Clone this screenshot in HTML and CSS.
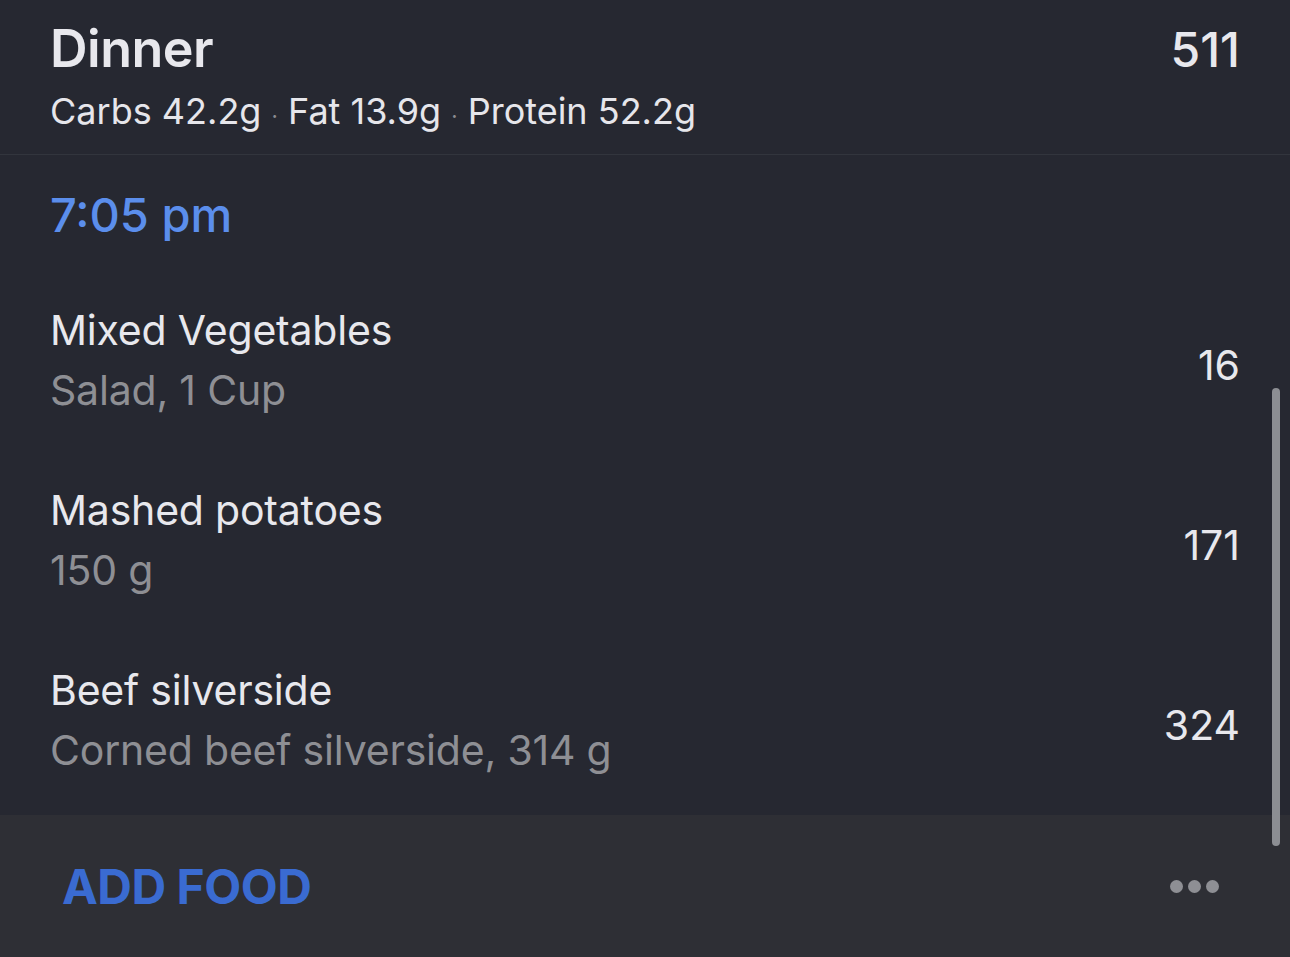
FILE: index.html
```html
<!DOCTYPE html>
<html lang="en">
<head>
    <meta charset="UTF-8">
    <meta name="viewport" content="width=device-width, initial-scale=1.0">
    <title>Dinner</title>
    <link rel="stylesheet" href="styles.css">
</head>
<body>

    <div class="screen">
        <header class="meal-header">
            <div class="meal-info">
                <h1 class="meal-title">Dinner</h1>
                <div class="macros">
                    Carbs 42.2g <span class="sep">·</span> Fat 13.9g <span class="sep">·</span> Protein 52.2g
                </div>
            </div>
            <div class="meal-total">511</div>
        </header>

        <section class="entries">
            <div class="entry-time">7:05 pm</div>

            <div class="food-row">
                <div class="food-text">
                    <div class="food-name">Mixed Vegetables</div>
                    <div class="food-detail">Salad, 1 Cup</div>
                </div>
                <div class="food-cal">16</div>
            </div>

            <div class="food-row">
                <div class="food-text">
                    <div class="food-name">Mashed potatoes</div>
                    <div class="food-detail">150 g</div>
                </div>
                <div class="food-cal">171</div>
            </div>

            <div class="food-row">
                <div class="food-text">
                    <div class="food-name">Beef silverside</div>
                    <div class="food-detail">Corned beef silverside, 314 g</div>
                </div>
                <div class="food-cal">324</div>
            </div>
        </section>

        <footer class="meal-footer">
            <button class="add-food">ADD FOOD</button>
            <div class="more">
                <span class="dot"></span>
                <span class="dot"></span>
                <span class="dot"></span>
            </div>
        </footer>

        <div class="scrollbar"></div>
    </div>

</body>
</html>
```

FILE: styles.css
```css
body {
    margin: 0;
    padding: 0;
    background-color: #262831;
    font-family: Inter, "Noto Sans", sans-serif;
    color: #e8e8ed;
    overflow: hidden;
}

.screen {
    position: relative;
    width: 1290px;
    height: 957px;
    display: flex;
    flex-direction: column;
}

.meal-header {
    display: flex;
    justify-content: space-between;
    align-items: flex-start;
    padding: 19px 50px 16px 50px;
    border-bottom: 1px solid #32353d;
}

.meal-title {
    margin: 0;
    font-size: 52px;
    font-weight: 600;
    line-height: 60px;
    letter-spacing: -0.5px;
}

.macros {
    margin-top: 10px;
    font-size: 36px;
    line-height: 44px;
    color: #e6e6eb;
}

.sep {
    color: #8a8b90;
    font-size: 22px;
}

.meal-total {
    font-size: 48px;
    line-height: 60px;
    font-weight: 500;
    margin-top: 1px;
}

.entries {
    flex: 1;
    padding: 0 50px;
}

.entry-time {
    padding: 32px 0 32px 0;
    font-size: 47px;
    line-height: 56px;
    font-weight: 500;
    color: #5b8eec;
}

.food-row {
    display: flex;
    justify-content: space-between;
    align-items: center;
    height: 180px;
}

.food-text {
    padding-bottom: 10px;
}

.food-name {
    font-size: 41px;
    line-height: 60px;
    color: #e8e8ed;
    letter-spacing: -0.2px;
}

.food-detail {
    font-size: 41px;
    line-height: 60px;
    color: #8e8f94;
    letter-spacing: -0.2px;
}

.food-cal {
    font-size: 41px;
    color: #e8e8ed;
}

.meal-footer {
    height: 144px;
    background-color: #2e2f35;
    display: flex;
    justify-content: space-between;
    align-items: center;
    padding: 0 71px 0 62px;
}

.add-food {
    background: none;
    border: none;
    padding: 0;
    font-family: Inter, "Noto Sans", sans-serif;
    font-size: 48px;
    font-weight: 700;
    color: #3a6bd1;
    letter-spacing: -0.5px;
    cursor: pointer;
}

.more {
    display: flex;
    gap: 5px;
}

.dot {
    width: 13px;
    height: 13px;
    border-radius: 50%;
    background-color: #8e8f94;
}

.scrollbar {
    position: absolute;
    left: 1272px;
    top: 388px;
    width: 8px;
    height: 458px;
    border-radius: 4px;
    background-color: #8c8e93;
}
```
